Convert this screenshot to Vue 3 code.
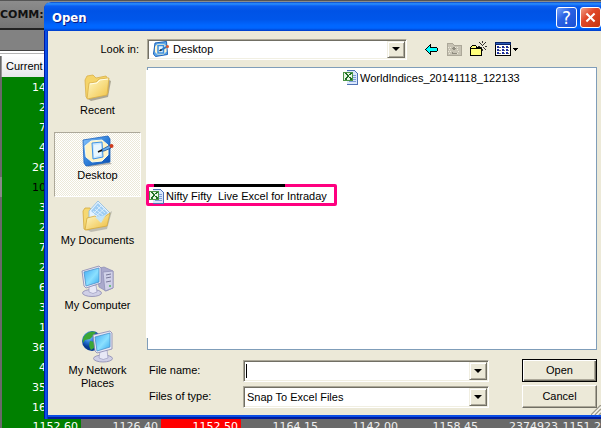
<script setup>
import { ref } from 'vue'

const lookIn = ref('Desktop')
const fileName = ref('')
const fileType = ref('Snap To Excel Files')
const place = ref('desktop')

const quotes = ['14', '2', '7', '4', '26', '10', '3', '2', '7', '2', '6', '3', '1', '36', '4', '35', '16']
const totals = [
  { value: '1152.60', tone: 'up' },
  { value: '1126.40', tone: '' },
  { value: '1152.50', tone: 'down' },
  { value: '1164.15', tone: '' },
  { value: '1142.00', tone: '' },
  { value: '1158.45', tone: '' },
  { value: '2374923', tone: '' },
  { value: '1151.2', tone: '' }
]
const places = [
  { id: 'recent', label: 'Recent' },
  { id: 'desktop', label: 'Desktop' },
  { id: 'documents', label: 'My Documents' },
  { id: 'computer', label: 'My Computer' },
  { id: 'network', label: 'My Network Places' }
]
</script>

<template>
  <div class="screen">
    <div class="sheet">
      <div class="sheet-title">COMM:</div>
      <div class="sheet-bar"></div>
      <div class="sheet-head">Current</div>
      <div class="quotes">
        <div v-for="(q, i) in quotes" :key="i" class="quote" :class="{ active: i === 5 }"><span>{{ q }}</span></div>
      </div>
      <div class="totals">
        <span v-for="(t, i) in totals" :key="i" class="total" :class="t.tone">{{ t.value }}</span>
      </div>
    </div>

    <section class="dialog" role="dialog" aria-labelledby="dialog-title">
      <header class="titlebar">
        <h1 id="dialog-title">Open</h1>
        <button class="cap help" type="button" aria-label="Help">?</button>
        <button class="cap close" type="button" aria-label="Close">
          <svg viewBox="0 0 21 21"><path d="M6 6 L15 15 M15 6 L6 15" stroke="#fff" stroke-width="2.2" /></svg>
        </button>
      </header>

      <form class="body" @submit.prevent>
        <div class="lookin">
          <label for="look-in">Look in:</label>
          <div class="combo with-icon">
            <select id="look-in" v-model="lookIn"><option>Desktop</option></select>
            <svg class="combo-icon" viewBox="0 0 32 32">
              <path d="M4 4 L27 1 L29 27 L5 31 L1 26 Z" fill="#5fa8ea" stroke="#1c62b8" stroke-width="2" />
              <path d="M9 6 H22 L27 11 V21 L21 27 H9 L4 22 V11 Z" fill="#fff5cf" />
              <path d="M10 9 H21 V24 H10 Z" fill="#e4f4ff" stroke="#3b8fe0" stroke-width="3" />
              <path d="M15 19 L28 11" stroke="#2e79c4" stroke-width="4" />
              <path d="M13 20 L17 17" stroke="#123" stroke-width="3" />
              <circle cx="29" cy="11" r="3" fill="#e0582c" />
            </svg>
            <span class="drop"></span>
          </div>
          <div class="tools">
            <button type="button" aria-label="Back">
              <svg width="13" height="11" viewBox="0 0 13 11" shape-rendering="crispEdges"><path d="M5 0h1v3h6v1h1v3h-1v1H6v3H5v-1H4V9H3V8H2V7H1V6H0V5h1V4h1V3h1V2h1V1h1z" fill="#000" /><path d="M5 2v2h7v3H5v2H4V8H3V7H2V6H1V5h1V4h1V3h1V2z" fill="#0ff" /></svg>
            </button>
            <button type="button" aria-label="Up one level" disabled>
              <svg width="16" height="14" viewBox="0 0 16 14" shape-rendering="crispEdges">
                <path d="M1 3 L2 1 H6 L8 3 H15 V13 H1 Z" fill="#c7c3b4" stroke="#aca899" />
                <path d="M2 5h1m1 0h1m4 0h1m1 0h1M3 7h1m7 0h1M2 9h1m1 0h1m7 0h1M3 11h1m7 0h1" stroke="#ece9d8" />
                <path d="M7 5h2v1h1v1h-1v1H7V7H6V6h1z" fill="#8e8b7e" />
                <path d="M6 10h1v1h4v1H6z" fill="#8e8b7e" />
              </svg>
            </button>
            <button type="button" aria-label="New folder">
              <svg width="17" height="16" viewBox="0 0 17 16" shape-rendering="crispEdges">
                <path d="M1 5h1V4h4v1h1v1h5v9H0V6h1z" fill="#000" />
                <path d="M2 5h4v1H2zM1 8h10v6H1zM1 6h5v1H1z" fill="#ffff7c" />
                <path d="M12 0h1v2h-1zM12 8h1v2h-1zM8 5h2v1H8zM15 5h2v1h-2zM9 1h1v1H9zM10 2h1v1h-1zM15 1h1v1h-1zM14 2h1v1h-1zM14 7h1v1h-1zM15 8h1v1h-1zM12 4h1v1h-1zM11 3h1v1h-1zM13 3h1v1h-1zM11 6h1v1h-1zM13 6h1v1h-1z" fill="#333" />
              </svg>
            </button>
            <button type="button" aria-label="Views">
              <svg width="24" height="14" viewBox="0 0 24 14" shape-rendering="crispEdges">
                <rect x=".5" y=".5" width="15" height="13" fill="#fff" stroke="#000" />
                <rect x="0" y="0" width="16" height="3" fill="#0a246a" />
                <rect x="1" y="1" width="14" height="1" fill="#2a5ab8" />
                <path d="M2 4h2v2H2zM7 4h2v2H7zM11 4h2v2h-2zM2 7h2v2H2zM7 7h2v2H7zM11 7h2v2h-2zM2 10h2v2H2zM7 10h2v2H7zM11 10h2v2h-2z" fill="#1c2fa0" />
                <path d="M4 5h2v1H4zM9 5h1v1H9zM13 5h1v1h-1zM4 8h2v1H4zM9 8h1v1H9zM13 8h1v1h-1zM4 11h2v1H4zM9 11h1v1H9zM13 11h1v1h-1z" fill="#666" />
                <path d="M18 6h5v1h-1v1h-1v1h-1v-1h-1v-1h-1z" fill="#000" />
              </svg>
            </button>
          </div>
        </div>

        <div class="main">
          <nav class="places">
            <button v-for="p in places" :key="p.id" type="button" class="place" :class="{ pressed: place === p.id }" @click="place = p.id">
              <svg v-if="p.id === 'recent'" viewBox="0 0 32 32">
                <defs><linearGradient id="gf" x1="0" y1="0" x2="1" y2="1"><stop offset="0" stop-color="#fffac8" /><stop offset="1" stop-color="#f1c244" /></linearGradient></defs>
                <path d="M6 28 L9 30 L26 26 L29 10 L27 9 Z" fill="#77705c" opacity=".55" />
                <path d="M4 26 L3 9 L5 5 L11 4 L14 7 L24 5 L26 8 L26 22 L6 28 Z" fill="#f5d468" stroke="#d9b04a" stroke-width=".8" />
                <path d="M7 12 L14 11 L17 8 L27 7 L25 24 L5 28 Z" fill="url(#gf)" stroke="#d9b04a" stroke-width=".8" />
                <path d="M8 13 L15 12 L18 9 L26 8" fill="none" stroke="#fffde8" />
              </svg>
              <svg v-else-if="p.id === 'desktop'" viewBox="0 0 32 32">
                <defs><linearGradient id="gd" x1="0" y1="0" x2="1" y2="1"><stop offset="0" stop-color="#8fcaff" /><stop offset=".5" stop-color="#2f80da" /><stop offset="1" stop-color="#0a4db0" /></linearGradient></defs>
                <path d="M4 29 L26 25 L30 28 L6 31 Z" fill="#555" opacity=".4" />
                <path d="M1 4 L26 0 L28 3 L28 26 L4 30 L2 27 Z" fill="url(#gd)" stroke="#1b62bd" stroke-width=".8" />
                <path d="M9 5 L20 4 L26 9 L26 19 L20 25 L10 26 L4 21 L3 10 Z" fill="#fff3c4" stroke="#f9fbe9" />
                <path d="M10 7 L20 6 L21 21 L11 23 Z" fill="#c8e6ff" stroke="#3d92e5" />
                <path d="M12 9 L19 8 L19 19 L12 21 Z" fill="#e7f6ff" />
                <path d="M18 15 L21 13 L28 9 L29 12 L22 15 Z" fill="#67aef0" stroke="#174f94" stroke-width=".8" />
                <path d="M16 16 L20 14" stroke="#111" stroke-width="1.5" />
                <circle cx="29.500" cy="10" r="2" fill="#cf3c1d" />
              </svg>
              <svg v-else-if="p.id === 'documents'" viewBox="0 0 32 32">
                <defs><linearGradient id="gm" x1="0" y1="0" x2="1" y2="1"><stop offset="0" stop-color="#fffbd0" /><stop offset="1" stop-color="#eebb38" /></linearGradient></defs>
                <path d="M5 29 L9 31 L25 28 L30 10 Z" fill="#777" opacity=".4" />
                <path d="M2 28 L1 10 L3 7 L8 7 L10 10 L22 9 L24 22 L5 29 Z" fill="#f6d872" stroke="#d4a93e" stroke-width=".8" />
                <path d="M7 10 L16 0 L28 12 L26 21 L17 24 L7 18 Z" fill="#e4f3ff" stroke="#86b8e0" stroke-width=".8" />
                <path d="M9 10 L16 2 L26 12 L18 18 Z" fill="#9fcdf3" />
                <path d="M11 10 L19 16 M13 8 L21 14 M15 5 L23 12 M11 13 L19 5 M14 15 L22 8" stroke="#eef9ff" stroke-width=".7" />
                <path d="M3 29 L5 17 L13 15 L19 20 L22 16 L28 12 L25 25 Z" fill="url(#gm)" stroke="#d4a93e" stroke-width=".8" />
                <path d="M13 16 L24 14 L19 22 Z" fill="#c4e5fb" opacity=".9" />
              </svg>
              <svg v-else-if="p.id === 'computer'" viewBox="0 0 32 32">
                <defs><linearGradient id="gs" x1="0" y1="0" x2="1" y2="1"><stop offset="0" stop-color="#3faaf2" /><stop offset=".55" stop-color="#8be0ff" /><stop offset="1" stop-color="#37a9ee" /></linearGradient></defs>
                <path d="M14 3 L22 1 L31 5 L31 22 L24 25 L17 21 Z" fill="#aaa9cc" stroke="#9190b8" stroke-width=".8" />
                <path d="M21 6 L31 5 L31 22 L23 25 Z" fill="#d0d0e8" stroke="#9190b8" stroke-width=".8" />
                <path d="M24 9 L29 8 M24 12 L29 11 M24 16 L29 15" stroke="#787798" />
                <circle cx="28" cy="20" r="1" fill="#50b85c" />
                <ellipse cx="10" cy="27" rx="9.500" ry="3.500" fill="#cfcfe6" stroke="#8a89b1" stroke-width=".8" />
                <path d="M7 20 L14 19 L15 26 Q11 29 7 26 Z" fill="#e8e8f6" stroke="#9a99bd" stroke-width=".7" />
                <path d="M0 5 L17 0 L19 2 L19 17 L4 22 L2 20 Z" fill="#e7e7f4" stroke="#8786b0" stroke-width=".8" />
                <path d="M2 6 L17 2 L17 16 L4 20 Z" fill="url(#gs)" stroke="#4a92cc" stroke-width=".8" />
              </svg>
              <svg v-else viewBox="0 0 32 32">
                <defs>
                  <radialGradient id="gg" cx=".35" cy=".3"><stop offset="0" stop-color="#8dcaff" /><stop offset=".6" stop-color="#226ed0" /><stop offset="1" stop-color="#073a91" /></radialGradient>
                  <linearGradient id="gn" x1="0" y1="0" x2="1" y2="1"><stop offset="0" stop-color="#3faaf2" /><stop offset=".55" stop-color="#8be0ff" /><stop offset="1" stop-color="#37a9ee" /></linearGradient>
                </defs>
                <circle cx="10" cy="10" r="10" fill="url(#gg)" />
                <path d="M3 4 Q8 -1 14 1 L11 5 L8 8 L3 9 L1 12 Q0 7 3 4 Z M8 10 L13 11 L12 17 L9 19 Q6 15 8 10 Z" fill="#3ba635" />
                <ellipse cx="21" cy="27.500" rx="9.500" ry="3.500" fill="#cfcfe6" stroke="#8a89b1" stroke-width=".8" />
                <path d="M18 20 L25 19 L26 27 Q21 30 17 27 Z" fill="#e8e8f6" stroke="#9a99bd" stroke-width=".7" />
                <path d="M11 4 L28 0 L30 2 L30 18 L15 22 L13 20 Z" fill="#e7e7f4" stroke="#8786b0" stroke-width=".8" />
                <path d="M13 6 L28 2 L28 16 L15 20 Z" fill="url(#gn)" stroke="#4a92cc" stroke-width=".8" />
              </svg>
              <span>{{ p.label }}</span>
            </button>
          </nav>

          <div class="content">
            <div class="files">
              <button type="button" class="file plain">
                <svg viewBox="0 0 16 16" shape-rendering="crispEdges">
                  <path d="M4 1h8l3 3v11H4z" fill="#dbe7fb" />
                  <path d="M4 0h8v1H4zM12 1h1v1h-1zM13 2h1v1h-1zM14 3h1v12h-1zM4 14h10v1H4z" fill="#4f72b5" />
                  <path d="M10 5h3v1h-3zM10 7h3v1h-3zM10 9h3v1h-3zM6 11h7v1H6z" fill="#7d9fd8" />
                  <path d="M0 2h10v9H0z" fill="#4b9446" /><path d="M1 3h8v7H1z" fill="#eaf5e6" />
                  <path d="M2 3h2v1H2zM3 4h2v1H3zM4 5h2v2H4zM3 7h2v1H3zM2 8h2v2H2zM7 3h2v1H7zM6 4h2v1H6zM6 7h2v1H6zM7 8h2v2H7z" fill="#1f6f25" />
                </svg>
                <span>WorldIndices_20141118_122133</span>
              </button>
              <button type="button" class="file marked">
                <svg viewBox="0 0 16 16" shape-rendering="crispEdges">
                  <path d="M4 1h8l3 3v11H4z" fill="#dbe7fb" />
                  <path d="M4 0h8v1H4zM12 1h1v1h-1zM13 2h1v1h-1zM14 3h1v12h-1zM4 14h10v1H4z" fill="#4f72b5" />
                  <path d="M10 5h3v1h-3zM10 7h3v1h-3zM10 9h3v1h-3zM6 11h7v1H6z" fill="#7d9fd8" />
                  <path d="M0 2h10v9H0z" fill="#4b9446" /><path d="M1 3h8v7H1z" fill="#eaf5e6" />
                  <path d="M2 3h2v1H2zM3 4h2v1H3zM4 5h2v2H4zM3 7h2v1H3zM2 8h2v2H2zM7 3h2v1H7zM6 4h2v1H6zM6 7h2v1H6zM7 8h2v2H7z" fill="#1f6f25" />
                </svg>
                <span>Nifty Fifty&nbsp; Live Excel for Intraday</span>
              </button>
            </div>

            <div class="fields">
              <label for="file-name">File name:</label>
              <div class="combo">
                <input id="file-name" v-model="fileName" type="text" />
                <span class="caret"></span>
                <span class="drop"></span>
              </div>
              <button class="push default" type="submit">Open</button>
              <label for="file-type">Files of type:</label>
              <div class="combo">
                <select id="file-type" v-model="fileType"><option>Snap To Excel Files</option></select>
                <span class="drop"></span>
              </div>
              <button class="push" type="button">Cancel</button>
            </div>
          </div>
        </div>
        <svg class="grip" width="10" height="10" viewBox="0 0 10 10"><path d="M0 10 L10 0 M4 10 L10 4 M8 10 L10 8" stroke="#9d9a8b" stroke-width="1.5" /><path d="M1.5 10 L10 1.5 M5.5 10 L10 5.5" stroke="#fff" /></svg>
      </form>
    </section>
  </div>
</template>

<style>
body { margin: 0; background: #696969; }
</style>

<style scoped>
* { box-sizing: border-box; }
.screen {
  position: relative;
  height: 100vh;
  overflow: hidden;
  background: #696969;
  font: 11px/13px "Liberation Sans", Arial, sans-serif;
  color: #000;
}
button, input, select { font: inherit; color: inherit; margin: 0; padding: 0; border: 0; border-radius: 0; }
button { background: none; }

.sheet { font-family: "DejaVu Sans", Verdana, sans-serif; }
.sheet-title { height: 30px; line-height: 28px; border-bottom: 2px solid #222; border-top: 1px solid #555; background: linear-gradient(#8c8c8c, #747474); font-weight: bold; color: #111; }
.sheet-bar { height: 26px; background: linear-gradient(#828282 0 20px, #444 20px 21px, #fff 21px 23px, #b5b5b5 23px 24px, #fff 24px); }
.sheet-head { height: 21px; margin-left: 1px; padding-left: 4px; border-left: 1px solid #999; background: linear-gradient(#fff, #e6e6ea); line-height: 21px; font-family: "Liberation Sans", sans-serif; }
.quotes { width: 46px; }
.quote { height: 20px; border-left: 2px solid #696969; background: #008000; color: #fff; line-height: 21px; text-align: right; }
.quote.active { border-left-color: #888; color: #000; }
.totals { display: grid; grid-template-columns: 81px repeat(6, 80px) 40px; color: #eee; line-height: 20px; text-align: right; }
.total { padding-right: 3px; }
.total:last-child { padding-right: 0; }
.up { border-left: 2px solid #696969; background: #008000; color: #fff; }
.down { background: #f00; color: #fff; }

.dialog {
  position: absolute;
  inset: 2px 0 9px 44px;
  display: flex;
  flex-direction: column;
  padding-left: 4px;
  border-radius: 7px 0 0 0;
  background: linear-gradient(90deg, #0019a0 0 1px, #0a4ee6 1px 3px, #0038c8 3px 4px, #ece9d8 4px);
}
.titlebar {
  display: flex;
  align-items: center;
  gap: 3px;
  height: 29px;
  margin-left: -4px;
  padding: 2px 0 0 8px;
  border-radius: 7px 0 0 0;
  background: linear-gradient(#0a45c4, #2b90ff 6%, #0a5df0 14%, #0053e6 30%, #0056ea 60%, #0066ff 80%, #0066ff 90%, #003cc8);
}
.titlebar h1 { flex: 1; margin: 0; font: bold 13px/16px "DejaVu Sans Condensed", "DejaVu Sans", sans-serif; color: #fff; text-shadow: 1px 1px #0a1883; }
.cap { width: 21px; height: 21px; border: 1px solid #fff; border-radius: 3px; color: #fff; font: 17px/18px "DejaVu Sans", sans-serif; }
.cap svg { display: block; width: 19px; height: 19px; }
.help { background: linear-gradient(135deg, #7ba4f8, #2a62e4 40%, #1b50d4); }
.close { background: linear-gradient(135deg, #f0a088, #e0482a 40%, #c83410); }

.body { position: relative; flex: 1; display: flex; flex-direction: column; gap: 8px; padding: 8px 4px 8px 6px; box-shadow: inset 0 -2px #001c9c, inset 0 -4px #0a4ee6; }
.body { padding-bottom: 11px; }
.lookin { display: flex; align-items: center; height: 20px; }
.lookin label { width: 85px; margin-right: 8px; text-align: right; }
.lookin .combo { flex: 1; height: 21px; }
.tools { display: flex; align-items: center; width: 190px; padding-left: 18px; gap: 8px; }
.tools svg { display: block; }

.combo { display: grid; grid-template-columns: 1fr 18px; height: 22px; padding: 1px; border: 1px solid; border-color: #aca899 #fff #fff #aca899; background: #fff; box-shadow: inset 1px 1px #716f64, inset -1px -1px #f1efe2; }
.combo select, .combo input { grid-area: 1 / 1 / 2 / 3; appearance: none; width: 100%; min-width: 0; padding: 1px 20px 0 2px; background: none; outline: none; }
.with-icon select { padding-left: 24px; }
.combo-icon { grid-area: 1 / 1; align-self: center; width: 16px; height: 16px; margin-left: 4px; pointer-events: none; }
.caret { grid-area: 1 / 1; align-self: center; width: 1px; height: 14px; margin-left: 1px; background: #000; pointer-events: none; }
.drop { grid-area: 1 / 2; display: grid; place-items: center; border: 1px solid; border-color: #f1efe2 #716f64 #716f64 #f1efe2; background: #ece9d8; box-shadow: inset 1px 1px #fff, inset -1px -1px #aca899; pointer-events: none; }
.drop::after { content: ""; border: 4px solid transparent; border-top-color: #000; border-bottom: 0; }

.main { flex: 1; display: grid; grid-template-columns: 87px 1fr; gap: 6px; }
.place { display: flex; flex-direction: column; align-items: center; gap: 1px; width: 100%; height: 65px; padding: 4px 8px 0; border: 1px solid transparent; }
.place svg { flex: none; width: 32px; height: 32px; margin-top: -1px; overflow: visible; }
.place span { margin: 0 -8px; }
.place:last-child span { margin: 0; }
.place.pressed { border-color: #aca899 #fff #fff #aca899; background: repeating-conic-gradient(#fff 0 25%, #ece9d8 0 50%) 0 0 / 2px 2px; }

.content { display: flex; flex-direction: column; gap: 9px; }
.files { position: relative; flex: 1; display: grid; grid-template-columns: 195px 1fr; grid-template-rows: 115px 1fr; border: 1px solid #7f9db9; background: #fff; }
.files::before { content: ""; position: absolute; left: -2px; top: 2px; bottom: 11px; width: 4px; background: #fff; }
.file { position: relative; display: flex; align-items: center; gap: 1px; align-self: start; white-space: nowrap; }
.file svg { flex: none; width: 16px; height: 16px; }
.plain { grid-area: 1 / 2; height: 20px; }
.marked { grid-area: 2 / 1; width: 191px; height: 22px; margin: 1px 0 0 -2px; padding-top: 3px; border: 3px solid #ff0080; border-radius: 2px; }
.marked::before { content: ""; position: absolute; left: 5px; right: 49px; top: -3px; height: 3px; background: #000; }

.fields { display: grid; grid-template-columns: 96px 1fr 75px; row-gap: 3px; align-items: center; }
.fields label { padding-left: 2px; }
.push { height: 23px; border: 1px solid; border-color: #fff #716f64 #716f64 #fff; background: #ece9d8; box-shadow: inset -1px -1px #aca899; }
.fields .combo { margin-right: 33px; }
.default { border-color: #000; box-shadow: inset 1px 1px #fff, inset -1px -1px #716f64, inset -2px -2px #aca899; }
.grip { position: absolute; right: 0; bottom: 4px; }
</style>
